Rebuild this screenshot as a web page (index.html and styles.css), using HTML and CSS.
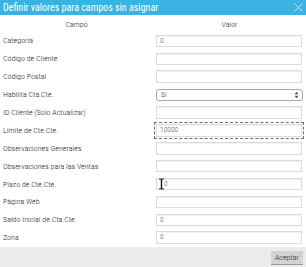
FILE: index.html
```html
<!DOCTYPE html>
<html lang="es">
<head>
<meta charset="utf-8">
<link rel="stylesheet" href="styles.css">
</head>
<body>
<div class="dialog">
  <div class="titlebar">
    <span class="title">Definir valores para campos sin asignar</span>
    <svg class="close" width="9" height="9" viewBox="0 0 9 9"><path d="M0.5 0.5L8.5 8.5M8.5 0.5L0.5 8.5" stroke="#cdeaf7" stroke-width="1" fill="none"/></svg>
  </div>
  <div class="fields">
    <div class="th">Campo</div><div class="th">Valor</div>

    <div class="label">Categoría</div>
    <div class="cell"><div class="input">0</div></div>

    <div class="label">Código de Cliente</div>
    <div class="cell"><div class="input"></div></div>

    <div class="label">Código Postal</div>
    <div class="cell"><div class="input"></div></div>

    <div class="label">Habilita Cta.Cte.</div>
    <div class="cell"><div class="select"><span>Si</span>
      <svg class="arrows" width="5" height="8" viewBox="0 0 5 8"><path d="M0.5 3.2L2.5 0.8L4.5 3.2Z M0.5 4.8L2.5 7.2L4.5 4.8Z" fill="#555"/></svg>
    </div></div>

    <div class="label">ID Cliente (Solo Actualizar)</div>
    <div class="cell"><div class="input"></div></div>

    <div class="label">Límite de Cte.Cte.</div>
    <div class="cell"><div class="input focused">10000</div></div>

    <div class="label">Observaciones Generales</div>
    <div class="cell"><div class="input"></div></div>

    <div class="label">Observaciones para las Ventas</div>
    <div class="cell"><div class="input"></div></div>

    <div class="label">Plazo de Cte.Cte.</div>
    <div class="cell"><div class="input plazo">0
      <svg class="ibeam" width="7" height="12" viewBox="0 0 7 12"><path d="M1 0.5H3L3.5 1L4 0.5H6V1.5H4.2V10.5H6V11.5H4L3.5 11L3 11.5H1V10.5H2.8V1.5H1Z" fill="#111" stroke="#fff" stroke-width="0.6" paint-order="stroke"/></svg>
    </div></div>

    <div class="label">Página Web</div>
    <div class="cell"><div class="input"></div></div>

    <div class="label">Saldo Inicial de Cta.Cte.</div>
    <div class="cell"><div class="input">0</div></div>

    <div class="label">Zona</div>
    <div class="cell"><div class="input">0</div></div>
  </div>
  <div class="footer">
    <button class="btn">Aceptar</button>
  </div>
</div>
</body>
</html>
```
FILE: styles.css
```css
html, body {
  margin: 0;
  padding: 0;
  background: #fff;
}
.dialog {
  width: 306px;
  height: 267px;
  display: flex;
  flex-direction: column;
  font-family: "Roboto Condensed", "Roboto", sans-serif;
  color: #444;
  overflow: hidden;
}
.titlebar {
  height: 15px;
  flex: none;
  background: #38b3e4;
  display: flex;
  align-items: center;
  justify-content: space-between;
  padding: 0 3px 0 3px;
}
.title {
  color: #fff;
  font-size: 10px;
  line-height: 15px;
  font-weight: 400;
}
.close {
  display: block;
}
.fields {
  flex: 1;
  display: grid;
  grid-template-columns: 153px 153px;
  grid-template-rows: 17px;
  grid-auto-rows: 17.9px;
  align-items: center;
}
.th {
  text-align: center;
  font-size: 8px;
  font-weight: 300;
  color: #1e1e1e;
  padding-top: 1px;
}
.label {
  font-size: 8px;
  font-weight: 300;
  padding-left: 3px;
  color: #222;
  white-space: nowrap;
}
.cell {
  padding-left: 3px;
}
.input {
  position: relative;
  box-sizing: border-box;
  width: 146px;
  height: 12.5px;
  border: 1px solid #dcdcdc;
  box-shadow: inset 0 1px 1px rgba(0,0,0,0.06);
  font-size: 7.5px;
  font-weight: 300;
  line-height: 10.5px;
  padding-left: 3px;
  color: #555;
  background: #fff;
}
.input.plazo {
  padding-left: 7px;
}
.input.focused {
  outline: 1px dashed #5a7385;
  outline-offset: 1px;
}
.select {
  box-sizing: border-box;
  width: 147px;
  height: 12px;
  border: 1px solid #a8a8a8;
  border-radius: 3px;
  font-size: 7.5px;
  font-weight: 300;
  line-height: 10px;
  padding: 0 3px 0 4px;
  color: #333;
  display: flex;
  align-items: center;
  justify-content: space-between;
  background: #fff;
}
.arrows {
  display: block;
}
.ibeam {
  position: absolute;
  left: 1px;
  top: -0.5px;
}
.footer {
  flex: none;
  height: 21px;
  background: #ebebeb;
  display: flex;
  justify-content: flex-end;
  align-items: center;
  padding-right: 3px;
}
.btn {
  font-family: "Roboto Condensed", "Roboto", sans-serif;
  font-size: 8px;
  font-weight: 300;
  color: #222;
  background: #d3d3d3;
  border: none;
  border-bottom: 1px solid #9a9a9a;
  height: 14px;
  padding: 0 4px;
  margin-top: 1px;
  line-height: 13px;
}
```
